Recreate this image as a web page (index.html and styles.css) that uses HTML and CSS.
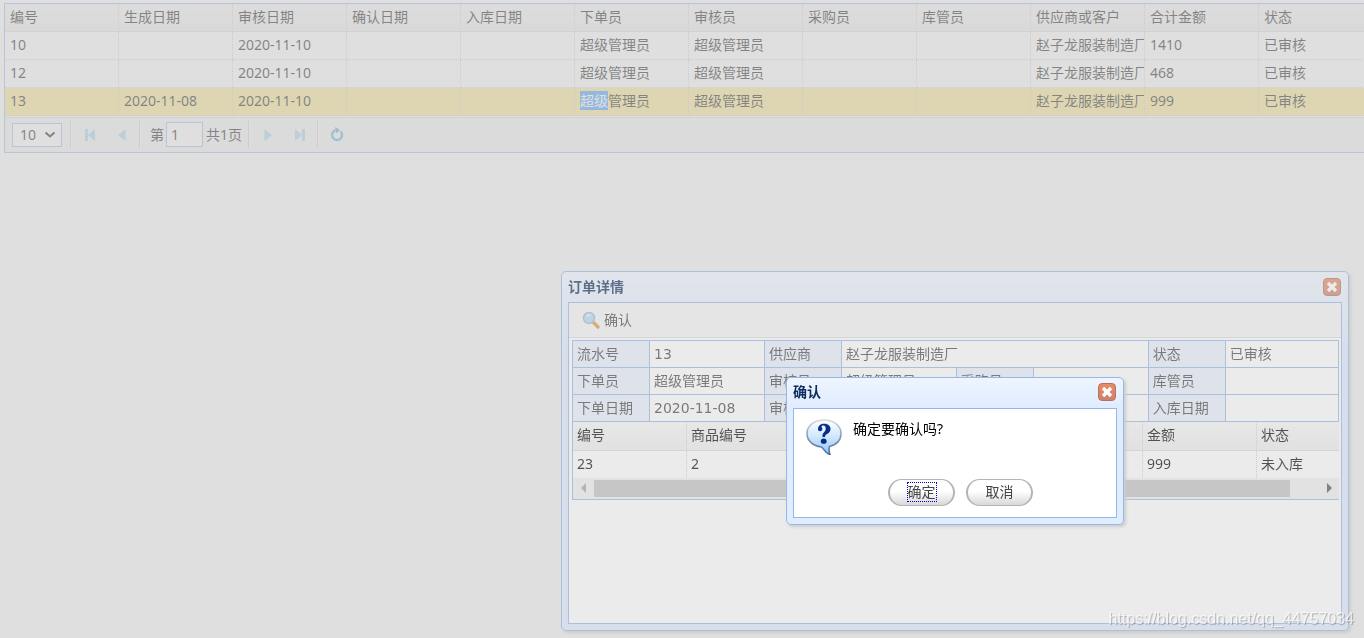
FILE: index.html
```
<!DOCTYPE html>
<html lang="zh-CN">
<head>
<meta charset="utf-8">
<title>订单详情</title>
<link rel="stylesheet" href="styles.css">
</head>
<body>
<main class="datagrid">
  <table class="grid">
    <thead>
      <tr><th>编号</th><th>生成日期</th><th>审核日期</th><th>确认日期</th><th>入库日期</th><th>下单员</th><th>审核员</th><th>采购员</th><th>库管员</th><th>供应商或客户</th><th>合计金额</th><th>状态</th></tr>
    </thead>
    <tbody>
      <tr><td>10</td><td></td><td>2020-11-10</td><td></td><td></td><td>超级管理员</td><td>超级管理员</td><td></td><td></td><td>赵子龙服装制造厂</td><td>1410</td><td>已审核</td></tr>
      <tr><td>12</td><td></td><td>2020-11-10</td><td></td><td></td><td>超级管理员</td><td>超级管理员</td><td></td><td></td><td>赵子龙服装制造厂</td><td>468</td><td>已审核</td></tr>
      <tr class="selected"><td>13</td><td>2020-11-08</td><td>2020-11-10</td><td></td><td></td><td><span class="marked">超级</span>管理员</td><td>超级管理员</td><td></td><td></td><td>赵子龙服装制造厂</td><td>999</td><td>已审核</td></tr>
    </tbody>
  </table>
  <div class="pager">
    <span class="select-box">
      <select aria-label="每页条数"><option>10</option></select>
      <svg class="chevron" viewBox="0 0 12 8"><path d="M1.500 1.500L6 5.500L10.500 1.500" fill="none" stroke="#000" stroke-width="2"/></svg>
    </span>
    <span class="sep"></span>
    <button class="page-btn" aria-label="首页"><svg viewBox="0 0 16 16"><path d="M3 2h3v12H3zM13 2v12L6 8z" fill="#9cd0ee"/></svg></button>
    <button class="page-btn" aria-label="上一页"><svg viewBox="0 0 16 16"><path d="M11.500 2v12L4 8z" fill="#9cd0ee"/></svg></button>
    <span class="sep"></span>
    <label class="page-label">第<input class="page-input" type="text" value="1"></label>
    <span class="page-total">共1页</span>
    <span class="sep"></span>
    <button class="page-btn" aria-label="下一页"><svg viewBox="0 0 16 16"><path d="M4.500 2v12L12 8z" fill="#9cd0ee"/></svg></button>
    <button class="page-btn" aria-label="末页"><svg viewBox="0 0 16 16"><path d="M3 2v12L10 8zM10 2h3v12h-3z" fill="#9cd0ee"/></svg></button>
    <span class="sep"></span>
    <button class="page-btn" aria-label="刷新"><svg viewBox="0 0 16 16"><path d="M11.500 4.300A5 5 0 1 1 6 3.400" fill="none" stroke="#55aed8" stroke-width="2.400"/><path d="M6 0L11 3L7 6.500z" fill="#4a9fce"/></svg></button>
  </div>
</main>

<div class="mask"></div>

<section class="window order-window">
  <header class="window-title">
    <h2>订单详情</h2>
    <button class="close" aria-label="关闭"><svg viewBox="1 1 16 16"><path d="M5 5L13 13M13 5L5 13" stroke="#fff" stroke-width="3.400"/></svg></button>
  </header>
  <div class="window-body">
    <div class="toolbar">
      <button class="tool-btn">
        <svg viewBox="0 0 18 18"><path d="M11 11L16 16" stroke="#d9963c" stroke-width="3.200" stroke-linecap="round"/><circle cx="7" cy="7" r="5.500" fill="#b5dbfa" stroke="#a9b7c8" stroke-width="1.500"/><path d="M3.500 6A4 4 0 0 1 10 4.500Q7 4 3.500 6z" fill="#eef8ff"/></svg>
        确认
      </button>
    </div>
    <div class="order">
      <table class="info">
        <colgroup><col class="k"><col class="v"><col class="k"><col class="v"><col class="k"><col class="v"><col class="k"><col></colgroup>
        <tbody>
          <tr><th>流水号</th><td>13</td><th>供应商</th><td colspan="3">赵子龙服装制造厂</td><th>状态</th><td>已审核</td></tr>
          <tr><th>下单员</th><td>超级管理员</td><th>审核员</th><td>超级管理员</td><th>采购员</th><td></td><th>库管员</th><td></td></tr>
          <tr><th>下单日期</th><td>2020-11-08</td><th>审核</th><td colspan="3"></td><th>入库日期</th><td></td></tr>
        </tbody>
      </table>
      <div class="items">
        <table class="grid">
          <thead><tr><th>编号</th><th>商品编号</th><th></th><th></th><th></th><th>金额</th><th>状态</th></tr></thead>
          <tbody><tr><td>23</td><td>2</td><td></td><td></td><td></td><td>999</td><td>未入库</td></tr></tbody>
        </table>
        <div class="scrollbar">
          <svg viewBox="0 0 20 20"><path d="M13 5v10L8 10z" fill="#a3a3a3"/></svg>
          <div class="track"><div class="thumb"></div></div>
          <svg viewBox="0 0 20 20"><path d="M8 5v10L13 10z" fill="#505050"/></svg>
        </div>
      </div>
    </div>
  </div>
</section>

<div class="mask"></div>

<section class="window confirm-window" role="dialog" aria-labelledby="confirm-title">
  <header class="window-title">
    <h2 id="confirm-title">确认</h2>
    <button class="close" aria-label="关闭"><svg viewBox="1 1 16 16"><path d="M5 5L13 13M13 5L5 13" stroke="#fff" stroke-width="3.400"/></svg></button>
  </header>
  <div class="window-body">
    <div class="message">
      <svg class="question" viewBox="0 0 36 36">
        <defs>
          <linearGradient id="bubble" x1="0" y1="0" x2="0" y2="1"><stop offset="0" stop-color="#ffffff"/><stop offset="0.450" stop-color="#d3e9fd"/><stop offset="1" stop-color="#8fc5f8"/></linearGradient>
          <linearGradient id="rim" x1="0" y1="0" x2="0" y2="1"><stop offset="0" stop-color="#d5dae0"/><stop offset="0.500" stop-color="#8299b4"/><stop offset="1" stop-color="#4c6f99"/></linearGradient>
        </defs>
        <path d="M18 1C8 1 1 7 1 14.500C1 22 7 27 15.500 28C18 30 20 35 24 35.500C22.500 32 22.800 30 23.500 27.500C31 25.500 35 20.500 35 14.500C35 7 28 1 18 1z" fill="url(#bubble)" stroke="url(#rim)" stroke-width="1.600"/>
        <path d="M12 10.500C12 6.500 15 4.800 18.200 4.800C22 4.800 24.500 7 24.500 10C24.500 12.500 23 14 21 15C19.300 15.900 19 16.800 19 18H16.500C16.300 15.500 17 14.200 18.200 13C19.300 12 19.700 11 19.700 9.500C19.700 7.500 18.900 6.400 17.400 6.400C16.300 6.400 15.500 6.900 15.500 7.600C15.500 8.400 16.300 8.700 16.300 10C16.300 11.400 15.500 12.200 14.200 12.200C12.900 12.200 12 11.500 12 10.500z" fill="#082c8c"/>
        <ellipse cx="17.700" cy="22.200" rx="2.900" ry="2.600" fill="#082c8c"/>
      </svg>
      <p>确定要确认吗?</p>
    </div>
    <div class="actions">
      <button class="pill"><span class="focused">确定</span></button>
      <button class="pill">取消</button>
    </div>
  </div>
</section>

<div class="watermark">https://blog.csdn.net/qq_44757034</div>
</body>
</html>
```
FILE: styles.css
```
* { box-sizing: border-box; }

html, body { height: 100%; }

body {
  margin: 0;
  padding: 3px 0 0 4px;
  overflow: hidden;
  background: #fff;
  color: #000;
  font: 14px/20px "Noto Sans", "Noto Sans CJK SC", sans-serif;
}

button, input, select { font: inherit; color: inherit; }

button {
  border: 0;
  padding: 0;
  background: none;
}

svg { display: block; flex: none; }

/* data grid */
.datagrid {
  border: 1px solid #95b8e7;
  border-right: 0;
  overflow: hidden;
}

.grid {
  width: 0;
  table-layout: fixed;
  border-collapse: separate;
  border-spacing: 0;
}

.grid th, .grid td {
  width: 114px;
  height: 28px;
  padding: 0 0 2px 5px;
  border: 0 dotted #ccc;
  border-width: 0 1px 1px 0;
  overflow: hidden;
  text-align: left;
  font-weight: 400;
  white-space: nowrap;
}

.grid th {
  border-bottom: 1px solid #ddd;
  background: linear-gradient(#f9f9f9, #efefef);
}

.selected td { background: #fee884; }

.marked {
  background: #3297fd;
  color: #fff;
}

/* pager */
.pager {
  display: flex;
  align-items: center;
  height: 35px;
  margin-top: 1px;
  padding: 0 0 1px 7px;
  border-top: 1px solid #ddd;
  background: #f5f5f5;
}

.select-box { position: relative; margin-right: 1px; }

.select-box select {
  display: block;
  width: 50px;
  height: 24px;
  padding: 0 7px;
  border: 1px solid #95b8e7;
  border-radius: 0;
  background: #fff;
  appearance: none;
}

.chevron {
  position: absolute;
  right: 6px;
  top: 8px;
  width: 12px;
  height: 8px;
}

.sep {
  width: 2px;
  height: 27px;
  margin: 0 9px 0 7px;
  border-left: 1px solid #ccc;
  border-right: 1px solid #fff;
}

.page-btn {
  width: 16px;
  margin: 0 2px 0 1px;
}

.page-btn + .page-btn { margin-left: 14px; }

.page-btn svg {
  width: 16px;
  height: 16px;
}

.page-label {
  display: flex;
  align-items: center;
  gap: 2px;
}

.page-input {
  width: 37px;
  height: 25px;
  padding: 0 4px;
  border: 1px solid #95b8e7;
  background: #fff;
}

.page-total { margin-left: 3px; margin-right: -1px; }

/* windows */
.mask {
  position: fixed;
  inset: 0;
  background: #ccc;
  opacity: 0.4;
}

.window {
  position: absolute;
  display: flex;
  flex-direction: column;
  padding: 0 6px 6px;
  border: 1px solid #95b8e7;
  border-radius: 5px;
  background: linear-gradient(#eff5ff, #e0ecff 20%);
  box-shadow: 2px 2px 3px #ccc;
}

.order-window {
  left: 561px;
  top: 271px;
  width: 788px;
  height: 360px;
}

.confirm-window {
  left: 786px;
  top: 377px;
  width: 338px;
  height: 148px;
}

.window-title {
  display: flex;
  align-items: center;
  justify-content: space-between;
  height: 30px;
  padding-right: 1px;
  flex: none;
}

.confirm-window .window-title { padding-bottom: 2px; }

.window-title h2 {
  margin: 0;
  color: #0e2d5f;
  font-size: 14px;
  font-weight: 700;
}

.close {
  border-radius: 4px;
  border: 1px solid #b5715f;
  background: linear-gradient(#ea8a63, #d08070);
}

.close svg { width: 16px; height: 16px; }

.window-body {
  flex: 1;
  border: 1px solid #95b8e7;
  background: #fff;
}

.toolbar {
  height: 35px;
  padding: 7px 13px;
  border-bottom: 1px solid #ddd;
  background: #f5f5f5;
}

.tool-btn {
  display: flex;
  align-items: center;
  gap: 4px;
  color: #444;
}

.tool-btn svg { width: 18px; height: 18px; }

.order { padding: 2px 2px 0 3px; }

.info {
  width: 100%;
  table-layout: fixed;
  border-collapse: collapse;
  color: #444;
  font-family: "DejaVu Sans", "Noto Sans CJK SC", sans-serif;
}

.k { width: 77px; }
.v { width: 15%; }

.info th, .info td {
  height: 27px;
  padding: 0 4px;
  border: 1px solid #95b8e7;
  text-align: left;
  font-weight: 400;
  white-space: nowrap;
}

.info th { background: #eaf2ff; }

.items {
  border: 1px solid #95b8e7;
  border-width: 0 0 1px 1px;
  overflow: hidden;
}

.items .grid { width: 100%; }

.items .grid th, .items .grid td { padding-left: 4px; }

.items .grid th { height: 29px; }

.items .grid td { border-bottom: 0; height: 27px; }

.items .grid th:last-child, .items .grid td:last-child {
  width: auto;
  border-right: 0;
}

.scrollbar {
  display: flex;
  height: 21px;
  background: #f1f1f1;
}

.scrollbar svg { width: 20px; height: 20px; }

.track { flex: 1; padding: 2px 0 2px 1px; }

.thumb {
  width: 96%;
  height: 17px;
  background: #c1c1c1;
}

/* confirm dialog */
.message {
  display: flex;
  gap: 11px;
  padding: 10px 12px 0;
}

.question { width: 36px; height: 36px; }

.message p { margin: 0; }

.actions {
  display: flex;
  justify-content: center;
  gap: 11px;
  padding: 24px 0 0 11px;
}

.pill {
  width: 67px;
  height: 27px;
  padding-bottom: 2px;
  border: 1px solid #b4b4b4;
  border-width: 1px 2px;
  border-radius: 14px;
  background: linear-gradient(#fff 45%, #d8d8d8);
  color: #444;
}

.focused {
  display: inline-block;
  outline: 1px dotted #00c;
  line-height: 18px;
}

.watermark {
  position: absolute;
  right: 10px;
  bottom: 9px;
  color: rgba(255, 255, 255, 0.700);
  font: 16px/20px "Liberation Sans", sans-serif;
  text-shadow: 1px 1px 1px rgba(0, 0, 0, 0.250);
}
```
